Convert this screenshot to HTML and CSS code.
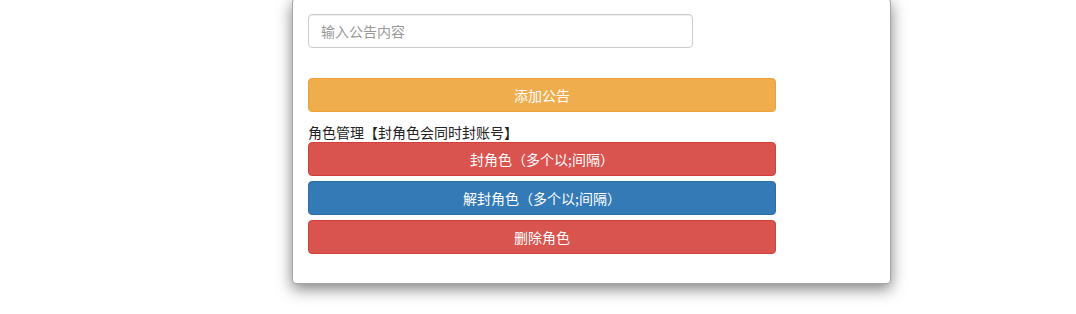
FILE: index.html
```html
<!DOCTYPE html>
<html lang="zh-CN">
<head>
<meta charset="utf-8">
<link rel="stylesheet" href="styles.css">
</head>
<body>
<div class="card">
  <input class="field" type="text" placeholder="输入公告内容">
  <button class="btn btn-warning add">添加公告</button>
  <div class="label">角色管理【封角色会同时封账号】</div>
  <div class="stack">
    <button class="btn btn-danger">封角色（多个以;间隔）</button>
    <button class="btn btn-primary">解封角色（多个以;间隔）</button>
    <button class="btn btn-danger">删除角色</button>
  </div>
</div>
</body>
</html>
```
FILE: styles.css
```css
html, body {
  margin: 0;
  padding: 0;
  background: #fff;
}
body {
  font-family: "Noto Sans CJK SC", "Microsoft YaHei", "Liberation Sans", sans-serif;
  font-size: 14px;
  color: #333;
  padding-bottom: 30px;
  min-height: 314px;
  box-sizing: border-box;
}
.card {
  box-sizing: border-box;
  width: 599px;
  margin: -2px 0 0 292px;
  padding: 15px 15px 29px 15px;
  background: #fff;
  border: 1px solid #a6a6a6;
  border-radius: 4px;
  box-shadow: 0 5px 15px rgba(0, 0, 0, 0.5);
  display: flex;
  flex-direction: column;
  align-items: flex-start;
}
.field {
  box-sizing: border-box;
  width: 385px;
  height: 34px;
  padding: 6px 12px;
  border: 1px solid #ccc;
  border-radius: 4px;
  font-family: inherit;
  font-size: 14px;
  color: #555;
  outline: none;
  box-shadow: inset 0 1px 1px rgba(0, 0, 0, 0.075);
}
.field::placeholder {
  color: #999;
}
.btn {
  box-sizing: border-box;
  width: 468px;
  height: 34px;
  padding: 0 12px;
  border: 1px solid transparent;
  border-radius: 4px;
  color: #fff;
  font-family: inherit;
  font-size: 14px;
  line-height: 20px;
  text-align: center;
  cursor: pointer;
}
.add {
  margin-top: 30px;
}
.btn-warning {
  background: #f0ad4e;
  border-color: #eea236;
}
.btn-danger {
  background: #d9534f;
  border-color: #d43f3a;
}
.btn-primary {
  background: #337ab7;
  border-color: #2e6da4;
}
.label {
  margin-top: 10px;
  line-height: 20px;
  color: #222;
}
.stack {
  display: flex;
  flex-direction: column;
  gap: 5px;
}
```
